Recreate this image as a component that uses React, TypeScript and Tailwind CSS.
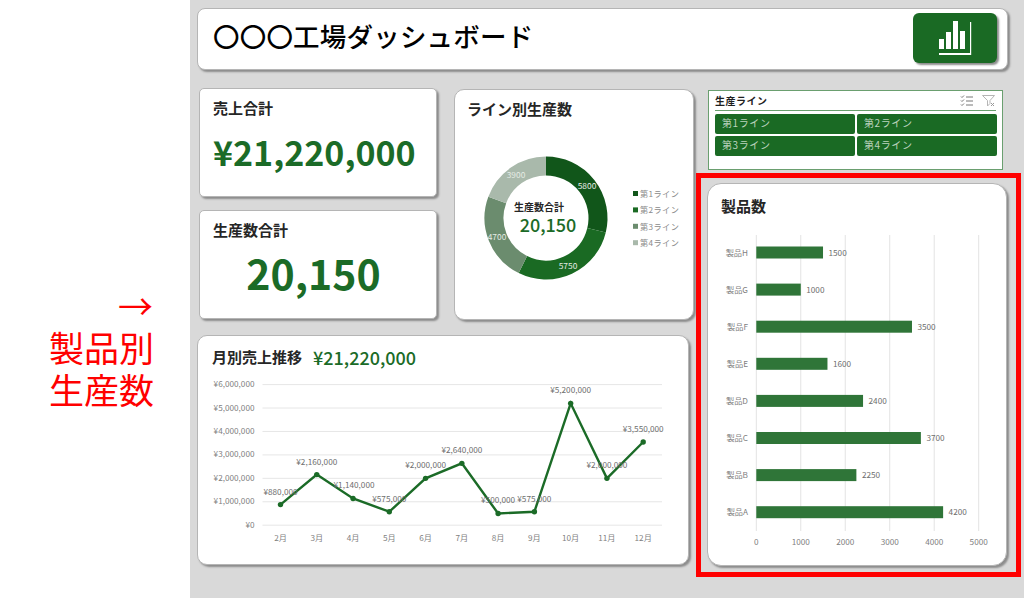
const JP = '"Noto Sans CJK JP", sans-serif';
const GREY = "#7f7f7f";

// 月別売上推移
const months = ["2月", "3月", "4月", "5月", "6月", "7月", "8月", "9月", "10月", "11月", "12月"];
const sales = [880000, 2160000, 1140000, 575000, 2000000, 2640000, 500000, 575000, 5200000, 2000000, 3550000];
const lineX = (i: number) => 82.5 + i * 36.27;
const lineY = (v: number) => 150.2 - (v / 6000000) * 140.6;
const yen = (v: number) => "¥" + v.toLocaleString("en-US");
const labelShift = [0, 0, 1, 0, 0, 0, 0, 0, 0, 0, 0];

function LineChart() {
  return (
    <svg width="492" height="190" className="block" fontFamily={JP}>
      {[0, 1, 2, 3, 4, 5, 6].map((n) => (
        <g key={n}>
          <line x1="64.5" x2="464" y1={lineY(n * 1000000)} y2={lineY(n * 1000000)} stroke="#e6e6e6" strokeWidth="1" />
          <text x="56.5" y={lineY(n * 1000000) + 2.5} textAnchor="end" fontSize="8.2" fill={GREY}>
            {yen(n * 1000000)}
          </text>
        </g>
      ))}
      <polyline
        points={sales.map((v, i) => `${lineX(i)},${lineY(v)}`).join(" ")}
        fill="none"
        stroke="#1b6b27"
        strokeWidth="2.4"
      />
      {sales.map((v, i) => (
        <g key={i}>
          <circle cx={lineX(i)} cy={lineY(v)} r="2.7" fill="#1b6b27" />
          <text x={lineX(i) + labelShift[i]} y={lineY(v) - 10} textAnchor="middle" fontSize="8.2" fill="#6e6e6e">
            {yen(v)}
          </text>
          <text x={lineX(i)} y="166" textAnchor="middle" fontSize="8.2" fill={GREY}>
            {months[i]}
          </text>
        </g>
      ))}
    </svg>
  );
}

// ライン別生産数
const lineData = [
  { name: "第1ライン", value: 5800, color: "#11561a" },
  { name: "第2ライン", value: 5750, color: "#1a6a23" },
  { name: "第3ライン", value: 4700, color: "#6b8c6e" },
  { name: "第4ライン", value: 3900, color: "#a9b9ab" },
];
const lineLabels = [
  { x: 132, y: 59 },
  { x: 113, y: 139 },
  { x: 42, y: 110 },
  { x: 61, y: 48 },
];

function arc(start: number, end: number) {
  const cx = 91;
  const cy = 88;
  const r = 52;
  const a = (start / 20150) * Math.PI * 2;
  const b = (end / 20150) * Math.PI * 2;
  const large = end - start > 10075 ? 1 : 0;
  return `M${cx + r * Math.sin(a)} ${cy - r * Math.cos(a)}A${r} ${r} 0 ${large} 1 ${cx + r * Math.sin(b)} ${cy - r * Math.cos(b)}`;
}

function Donut() {
  let total = 0;
  return (
    <svg width="238" height="190" className="block" fontFamily={JP}>
      {lineData.map((d) => {
        const path = arc(total, total + d.value);
        total += d.value;
        return <path key={d.name} d={path} fill="none" stroke={d.color} strokeWidth="19" />;
      })}
      {lineData.map((d, i) => (
        <g key={d.name}>
          <text x={lineLabels[i].x} y={lineLabels[i].y} textAnchor="middle" fontSize="8.4" fill="#e4ebe4">
            {d.value}
          </text>
          <rect x="178" y={61 + i * 16.4} width="5" height="5" fill={d.color} />
          <text x="185" y={67 + i * 16.4} fontSize="8.2" fill="#8a8a8a" letterSpacing="0.4">
            {d.name}
          </text>
        </g>
      ))}
      <text x="84" y="81" textAnchor="middle" fontSize="10" fontWeight="700" fill="#262626">
        生産数合計
      </text>
      <text x="93" y="102" textAnchor="middle" fontSize="18" fontWeight="500" fill="#1b6b27">
        20,150
      </text>
    </svg>
  );
}

// 製品数
const products = [
  { name: "製品H", value: 1500 },
  { name: "製品G", value: 1000 },
  { name: "製品F", value: 3500 },
  { name: "製品E", value: 1600 },
  { name: "製品D", value: 2400 },
  { name: "製品C", value: 3700 },
  { name: "製品B", value: 2250 },
  { name: "製品A", value: 4200 },
];

function BarChart() {
  const x0 = 48.3;
  const unit = 0.04448;
  return (
    <svg width="298" height="330" className="block" fontFamily={JP}>
      {[0, 1000, 2000, 3000, 4000, 5000].map((t) => (
        <g key={t}>
          <line x1={x0 + t * unit} x2={x0 + t * unit} y1="0" y2="296" stroke="#e3e3e3" strokeWidth="1" />
          <text x={x0 + t * unit} y="310" textAnchor="middle" fontSize="8.2" fill={GREY}>
            {t}
          </text>
        </g>
      ))}
      {products.map((p, i) => {
        const y = 17.5 + i * 37.1;
        return (
          <g key={p.name}>
            <text x="40" y={y + 3} textAnchor="end" fontSize="8.2" fill={GREY}>
              {p.name}
            </text>
            <rect x={x0} y={y - 6} width={p.value * unit} height="12" fill="#2f7538" />
            <text x={x0 + p.value * unit + 5.5} y={y + 3} fontSize="8.2" fill="#6e6e6e">
              {p.value}
            </text>
          </g>
        );
      })}
    </svg>
  );
}

function Card({ className, children }: { className: string; children: React.ReactNode }) {
  return (
    <div className={"bg-white border border-[#b5b5b5] shadow-[2px_2px_2px_#8c8c8c] " + className}>{children}</div>
  );
}

const slicerButtons = ["第1ライン", "第2ライン", "第3ライン", "第4ライン"];

export default function App() {
  return (
    <div className="flex w-[1024px] h-[598px] overflow-hidden bg-white" style={{ fontFamily: JP }}>
      {/* 左の注記 */}
      <div className="w-[190px] shrink-0 pt-[284px] pl-[49px] text-[#ff0000] text-[35px] leading-[42px]">
        <div className="pl-[69px]">→</div>
        <div>製品別</div>
        <div>生産数</div>
      </div>

      <div className="flex-1 bg-[#d9d9d9] pl-[7px] pt-[8px]">
        {/* ヘッダー */}
        <Card className="w-[811px] h-[62px] rounded-lg flex items-center justify-between pl-[15px] pr-[10px] pb-[2px]">
          <h1 className="text-[26.5px] font-medium text-black tracking-[0.2px] pb-[4px]">〇〇〇工場ダッシュボード</h1>
          <div className="w-[84px] h-[50px] rounded-md bg-[#1a6a24] shadow-[2px_2px_2px_#8c8c8c] flex items-center justify-center">
            <svg width="34" height="36" viewBox="0 0 34 36" fill="#fff">
              <rect x="1" y="19" width="5" height="10" />
              <rect x="8" y="12" width="5" height="17" />
              <rect x="15" y="1" width="5" height="28" />
              <rect x="22" y="11" width="5" height="18" />
              <rect x="32" y="2" width="1.2" height="33" />
              <rect x="1" y="33" width="32" height="2" />
            </svg>
          </div>
        </Card>

        <div className="flex mt-[18px]">
          <div className="w-[499px] shrink-0">
            <div className="flex h-[232px]">
              {/* 合計 */}
              <div className="ml-[2px] w-[238px] flex flex-col gap-[13px]">
                <Card className="h-[109px] rounded-[5px] pl-[13px] pt-[7px]">
                  <div className="text-[15px] leading-[24px] font-bold text-[#262626]">売上合計</div>
                  <div className="mt-[9px] text-[34px] leading-[46px] font-bold text-[#1b6b27]">¥21,220,000</div>
                </Card>
                <Card className="h-[109px] rounded-[5px] pl-[13px] pt-[7px]">
                  <div className="text-[15px] leading-[24px] font-bold text-[#262626]">生産数合計</div>
                  <div className="mt-[2px] text-[41px] leading-[56px] font-bold text-[#1b6b27] text-center pr-[22px]">20,150</div>
                </Card>
              </div>
              {/* ライン別 */}
              <Card className="ml-[17px] mt-[1px] w-[240px] h-[231px] rounded-[10px]">
                <div className="pl-[12px] pt-[8px] h-[40px] text-[15px] leading-[22px] font-bold text-[#262626]">ライン別生産数</div>
                <Donut />
              </Card>
            </div>

            {/* 月別 */}
            <Card className="mt-[15px] w-[492px] h-[230px] rounded-[10px]">
              <div className="h-[39px] pl-[14px] pt-[3px] flex items-center gap-[11px]">
                <span className="text-[15px] font-bold text-[#262626]">月別売上推移</span>
                <span className="text-[18px] font-medium text-[#1b6b27]">¥21,220,000</span>
              </div>
              <LineChart />
            </Card>
          </div>

          <div className="w-[325px] shrink-0">
            {/* スライサー */}
            <div className="ml-[12px] mt-[2px] w-[295px] h-[80px] bg-white border border-[#6a9f6f] px-[6px]">
              <div className="h-[20px] flex items-center justify-between border-b border-[#6a9f6f] pr-[1px]">
                <span className="text-[10px] font-bold text-[#1f1f1f] tracking-[0.5px]">生産ライン</span>
                <span className="flex items-center gap-[9px]">
                  <svg width="13" height="11" viewBox="0 0 13 11" fill="none" stroke="#777" strokeWidth="1">
                    <path d="M1 1.5l1 1 2-2M1 5.5l1 1 2-2M1 9.5l1 1 2-2M6 2h7M6 6h7M6 10h7" />
                  </svg>
                  <svg width="13" height="12" viewBox="0 0 13 12" fill="none" stroke="#b5b5b5" strokeWidth="1">
                    <path d="M0.5 0.5h12L8 5.5v3L5.5 11V5.5z" />
                    <path d="M9 8l3 3M12 8l-3 3" stroke="#999" />
                  </svg>
                </span>
              </div>
              <div className="mt-[3px] grid grid-cols-2 gap-x-[2px] gap-y-[2px] w-[282px]">
                {slicerButtons.map((b) => (
                  <div key={b} className="h-[20px] rounded-[2px] bg-[#1a6a24] pl-[7px] text-[10px] leading-[18px] tracking-[0.6px] text-[#bcd3be]">
                    {b}
                  </div>
                ))}
              </div>
            </div>

            {/* 製品別 (赤枠) */}
            <div className="mt-[3px] h-[404px] w-[325px] border-[5px] border-[#ff0000] pl-[6px] pt-[5px]">
              <Card className="w-[300px] h-[383px] rounded-[14px]">
                <div className="h-[51px] pl-[13px] pt-[10px] text-[15px] leading-[24px] font-bold text-[#262626]">製品数</div>
                <BarChart />
              </Card>
            </div>
          </div>
        </div>
      </div>
    </div>
  );
}
